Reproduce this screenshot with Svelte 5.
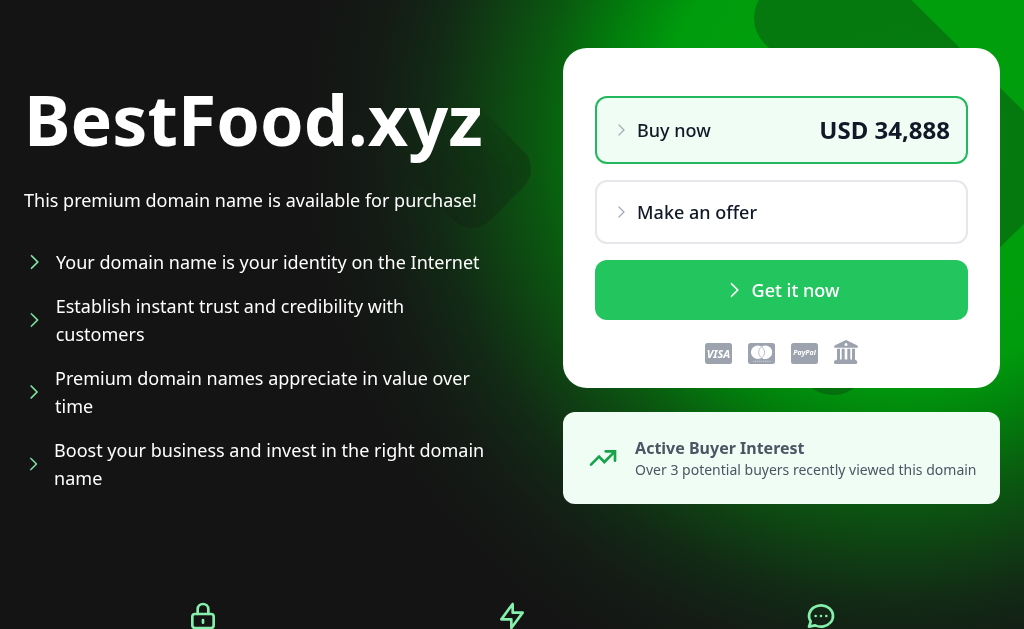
<script lang="ts">
	const domain = 'BestFood.xyz';
	const price = 'USD 34,888';

	const benefits = [
		'Your domain name is your identity on the Internet',
		'Establish instant trust and credibility with customers',
		'Premium domain names appreciate in value over time',
		'Boost your business and invest in the right domain name'
	];

	let selected = $state('buy');
</script>

{#snippet caret()}
	<svg class="caret" viewBox="0 0 256 256" fill="currentColor" aria-hidden="true">
		<path d="m181.66 133.66l-80 80a8 8 0 0 1-11.32-11.32L164.69 128L90.34 53.66a8 8 0 0 1 11.32-11.32l80 80a8 8 0 0 1 0 11.32" />
	</svg>
{/snippet}

<svg class="backdrop" viewBox="0 0 1024 629" preserveAspectRatio="xMaxYMin slice" aria-hidden="true">
	<defs>
		<radialGradient id="glow" gradientUnits="userSpaceOnUse" cx="900" cy="135" r="600">
			<stop offset="0" stop-color="#00a00d" />
			<stop offset="0.4" stop-color="#009c0d" />
			<stop offset="0.5" stop-color="#027e0c" />
			<stop offset="0.6" stop-color="#0a5a10" />
			<stop offset="0.69" stop-color="#0f4113" />
			<stop offset="0.78" stop-color="#122a15" />
			<stop offset="0.88" stop-color="#141b15" />
			<stop offset="1" stop-color="#141414" />
		</radialGradient>
		<linearGradient id="fade" gradientUnits="userSpaceOnUse" x1="430" y1="130" x2="490" y2="190">
			<stop offset="0" stop-color="#141414" stop-opacity="0" />
			<stop offset="1" stop-color="#141414" />
		</linearGradient>
	</defs>
	<rect width="1024" height="629" fill="url(#glow)" />
	<g stroke-linejoin="round" opacity="0.26">
		<path fill="#141414" stroke="#141414" stroke-width="72" d="M790 18L834 -26L1030 168L833 359L789 315L940 168Z" />
		<path fill="url(#fade)" stroke="url(#fade)" stroke-width="50" d="M472 203L506 169L398 59L362 93Z" />
	</g>
</svg>

<main class="page">
	<div class="hero">
		<section class="intro">
			<h1>{domain}</h1>
			<p class="lead">This premium domain name is available for purchase!</p>
			<ul class="benefits">
				{#each benefits as benefit}
					<li>
						{@render caret()}
						<span>{benefit}</span>
					</li>
				{/each}
			</ul>
		</section>

		<aside class="side">
			<div class="card">
				<button
					class="option"
					class:selected={selected === 'buy'}
					aria-pressed={selected === 'buy'}
					onclick={() => (selected = 'buy')}
				>
					{@render caret()}
					<span>Buy now</span>
					<strong>{price}</strong>
				</button>
				<button
					class="option"
					class:selected={selected === 'offer'}
					aria-pressed={selected === 'offer'}
					onclick={() => (selected = 'offer')}
				>
					{@render caret()}
					<span>Make an offer</span>
				</button>
				<button class="submit">
					{@render caret()}
					<span>Get it now</span>
				</button>

				<div class="payments">
					<svg viewBox="0 0 27 24" width="27" height="24" role="img" aria-label="Visa">
						<rect y="3" width="27" height="21" rx="2.5" fill="currentColor" />
						<text x="13.5" y="17.5" text-anchor="middle" font-size="11" font-weight="700" font-style="italic" fill="#fff">VISA</text>
					</svg>
					<svg viewBox="0 0 27 24" width="27" height="24" role="img" aria-label="Mastercard">
						<rect y="3" width="27" height="21" rx="2.5" fill="currentColor" />
						<circle cx="9.8" cy="12.3" r="6.8" fill="#fff" />
						<circle cx="17.4" cy="12.3" r="6.8" fill="#fff" />
						<path d="M13.6 6.7a6.8 6.8 0 0 0 0 11.2a6.8 6.8 0 0 0 0-11.2z" fill="#fff" stroke="currentColor" stroke-width="0.7" />
						<path d="M5 21.3h18" stroke="#fff" stroke-width="0.8" stroke-dasharray="1.4 0.6" opacity="0.6" />
					</svg>
					<svg viewBox="0 0 27 24" width="27" height="24" role="img" aria-label="PayPal">
						<rect y="3" width="27" height="21" rx="2.5" fill="currentColor" />
						<text x="13.5" y="15" text-anchor="middle" font-size="7" font-weight="700" font-style="italic" fill="#fff">PayPal</text>
					</svg>
					<svg viewBox="0 0 512 512" width="24" height="24" fill="currentColor" role="img" aria-label="Bank transfer">
						<path fill-rule="evenodd" d="M243 3q13-5 26 0l220 108q23 12 23 34q0 20-20 21H20q-20-1-20-21q0-22 23-34zM256 62a32 32 0 1 0 0 64a32 32 0 0 0 0-64z" />
						<path d="M64 184h64v230h36V184h64v230h56V184h64v230h36V184h64v232l37 27q11 10 11 27v10q0 32-32 32H32q-32 0-32-32v-10q0-17 11-27l53-27z" />
					</svg>
				</div>
			</div>

			<div class="interest">
				<svg viewBox="0 0 24 24" width="32" height="32" fill="none" stroke="currentColor" stroke-width="2" stroke-linecap="round" aria-hidden="true">
					<path d="M3 17l6-6l4 4l8-8M14 7h7v7" />
				</svg>
				<div>
					<h2>Active Buyer Interest</h2>
					<p>Over 3 potential buyers recently viewed this domain</p>
				</div>
			</div>
		</aside>
	</div>

	<section class="features" aria-label="Features">
		<svg viewBox="0 0 24 24" aria-hidden="true">
			<rect x="4" y="10.5" width="16" height="10.5" rx="2" />
			<path d="M8 10.5V7a4 4 0 0 1 8 0v3.5M12 15v2" />
		</svg>
		<svg viewBox="0 0 24 24" aria-hidden="true">
			<path d="M12.5 3v6.5h7.5L11.5 21v-6.5H4z" />
		</svg>
		<svg viewBox="0 0 24 24" aria-hidden="true">
			<path d="M3 20l1.3-3.9C1.976 12.663 2.874 8.228 6.4 5.726c3.526-2.501 8.59-2.296 11.845.48c3.255 2.777 3.695 7.266 1.029 10.501C16.608 19.942 11.659 20.922 7.7 19L3 20M12 12v.01M8 12v.01M16 12v.01" />
		</svg>
	</section>
</main>

<style>
	:global(body) {
		margin: 0;
		background: #141414;
	}

	.backdrop {
		position: fixed;
		inset: 0;
		width: 100%;
		height: 100%;
		z-index: -1;
	}

	.page {
		box-sizing: border-box;
		min-height: 100vh;
		padding: 48px 24px 0;
		font-family: 'Noto Sans', sans-serif;
		font-size: 18px;
		line-height: 28px;
		color: #fff;
	}

	.hero {
		display: grid;
		grid-template-columns: 31fr 29fr;
		gap: 72px;
	}

	.intro {
		padding-top: 24px;
		min-width: 0;
	}

	h1 {
		margin: 0 0 20px;
		font-size: 70px;
		font-weight: 700;
		line-height: 94px;
	}

	.lead {
		margin: 0 0 34px;
	}

	.benefits {
		display: flex;
		flex-direction: column;
		gap: 16px;
		margin: 0;
		padding: 0;
		list-style: none;
	}

	.benefits li {
		display: flex;
		align-items: center;
		gap: 12px;
	}

	.caret {
		display: block;
		width: 20px;
		height: 20px;
		min-width: 0;
		stroke: currentColor;
		stroke-width: 5;
	}

	.benefits .caret {
		color: #86efac;
	}

	.card {
		display: flex;
		flex-direction: column;
		gap: 16px;
		padding: 48px 32px 24px;
		border-radius: 24px;
		background: #fff;
	}

	button {
		display: flex;
		align-items: center;
		gap: 8px;
		padding: 16px;
		border-radius: 12px;
		font: inherit;
		font-weight: 500;
		cursor: pointer;
	}

	.option {
		border: 2px solid #e5e7eb;
		background: #fff;
		color: #111827;
	}

	.option.selected {
		border-color: #22b95e;
		background: #f0fdf4;
	}

	.option strong {
		margin-left: auto;
		font-size: 24px;
		font-weight: 700;
		line-height: 32px;
	}

	.option .caret {
		width: 16px;
		height: 16px;
		color: #9ca3af;
	}

	.submit {
		justify-content: center;
		border: 0;
		background: #22c55e;
		color: #fff;
	}

	.payments {
		display: flex;
		justify-content: center;
		gap: 16px;
		margin-top: 4px;
		color: #9ca3af;
	}

	.interest {
		display: flex;
		align-items: center;
		gap: 16px;
		margin-top: 24px;
		padding: 24px 20px 24px 24px;
		border-radius: 12px;
		background: #f0fdf4;
		color: #4b5563;
	}

	.interest svg {
		flex-shrink: 0;
		color: #16a34a;
	}

	.interest h2 {
		margin: 0;
		font-size: 16px;
		font-weight: 700;
		line-height: 24px;
	}

	.interest p {
		margin: 0;
		font-size: 14px;
		line-height: 20px;
	}

	.features {
		display: grid;
		grid-template-columns: repeat(3, 1fr);
		gap: 32px;
		justify-items: center;
		max-width: 896px;
		margin: 96px auto 0;
	}

	.features svg {
		width: 32px;
		height: 32px;
		fill: none;
		stroke: #86efac;
		stroke-width: 2;
		stroke-linecap: round;
		stroke-linejoin: round;
	}

	@media (max-width: 800px) {
		.hero {
			grid-template-columns: 1fr;
			gap: 48px;
		}

		h1 {
			font-size: 48px;
			line-height: 60px;
		}
	}
</style>
